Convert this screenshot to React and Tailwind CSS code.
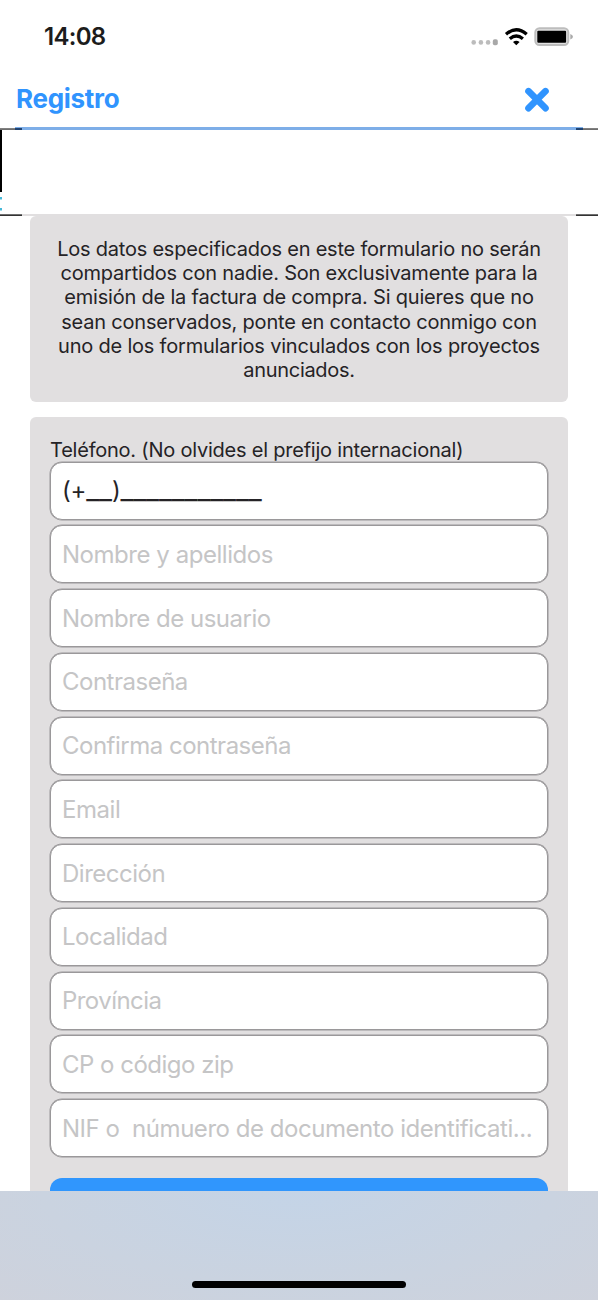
const notice = [
  ["Los datos especificados en este formulario no serán", "tracking-[-0.22px]"],
  ["compartidos con nadie. Son exclusivamente para la", "tracking-[-0.2px]"],
  ["emisión de la factura de compra. Si quieres que no", "tracking-[-0.2px]"],
  ["sean conservados, ponte en contacto conmigo con", "tracking-[-0.2px]"],
  ["uno de los formularios vinculados con los proyectos", "tracking-[-0.2px]"],
  ["anunciados.", "tracking-[-0.3px]"],
];

const fields = [
  ["Nombre y apellidos", "tracking-[-0.46px]"],
  ["Nombre de usuario", "tracking-[-0.5px]"],
  ["Contraseña", "tracking-[-0.5px]"],
  ["Confirma contraseña", "tracking-[-0.5px]"],
  ["Email", "tracking-[-0.45px]"],
  ["Dirección", "tracking-[-0.5px]"],
  ["Localidad", "tracking-[-0.5px]"],
  ["Província", "tracking-[-0.55px]"],
  ["CP o código zip", "tracking-[-0.5px]"],
  ["NIF o  númuero de documento identificati...", "tracking-[-0.46px]"],
];

function StatusIcons() {
  return (
    <svg className="mt-[24px] h-[26px] w-[104px]" viewBox="470 24 104 26" fill="none">
      <g fill="#bcbcbc">
        <circle cx="473.7" cy="42.4" r="2.3" />
        <circle cx="480.9" cy="42.4" r="2.3" />
        <circle cx="488.1" cy="42.4" r="2.3" />
        <rect x="492.8" y="39.2" width="5" height="6" rx="1.8" fill="#a8a8a8" />
      </g>
      <g stroke="#000" strokeWidth="3.3">
        <path d="M506 34.2Q516.3 25.2 526.7 34.2" />
        <path d="M509.8 38.7Q516.3 33.3 522.9 38.7" />
      </g>
      <path d="M513 42Q516.3 39.3 519.6 42L516.3 45.2Z" fill="#000" />
      <rect x="535.3" y="28.3" width="33" height="16.6" rx="4.2" fill="#e2e2e2" stroke="#bdbdbd" strokeWidth="2" />
      <rect x="537.3" y="30.7" width="28.8" height="12" rx="1" fill="#000" />
      <path d="M570.3 34Q573 35 573 36.7T570.3 39.4Z" fill="#aaa" />
    </svg>
  );
}

function Field({ children, tone, tracking }) {
  return (
    <div className={`flex h-[58px] shrink-0 items-center rounded-[12px] border border-[#9a989a] bg-white pt-[1px] pl-[11px] text-[24px] shadow-[0_0_0_0.5px_#9a989a] ${tone}`}>
      <span className={`whitespace-pre ${tracking}`}>{children}</span>
    </div>
  );
}

export default function App() {
  return (
    <div className="flex h-[1300px] w-[598px] flex-col overflow-hidden bg-white font-['Inter','Liberation_Sans',sans-serif] text-[#252326]">
      <header className="flex h-[74px] shrink-0 justify-between pr-[24px] pl-[44px]">
        <span className="pt-[20px] text-[24px] leading-[34px] font-semibold tracking-[-0.7px] text-[#1c1c1c]">14:08</span>
        <StatusIcons />
      </header>
      <div className="flex h-[53px] shrink-0 items-start justify-between pr-[48px] pl-[16px] text-[#3094fe]">
        <h1 className="pt-[9px] text-[26px] leading-[32px] font-bold tracking-[-0.3px]">Registro</h1>
        <svg className="mt-[13px] h-[26px] w-[26px]" viewBox="0 0 26 26" stroke="currentColor" strokeWidth="6.6" strokeLinecap="round">
          <path d="M4.5 4.2L21.5 21.2M21.5 4.2L4.5 21.2" />
        </svg>
      </div>
      <svg className="h-[89px] w-[598px] shrink-0" viewBox="0 127 598 89">
        <rect x="15" y="127" width="568" height="3" fill="#7eaee8" />
        <rect x="0" y="128.3" width="22" height="1.5" fill="#4b4b4b" />
        <rect x="576" y="128.3" width="22" height="1.5" fill="#4b4b4b" />
        <rect x="15" y="128.1" width="7" height="1.9" fill="#1d4271" />
        <rect x="576" y="128.1" width="7" height="1.9" fill="#1d4271" />
        <rect x="0" y="130" width="2" height="62" fill="#000" />
        <rect x="0" y="197" width="2" height="2.5" fill="#45b8d8" />
        <rect x="0" y="208" width="2" height="2.5" fill="#45b8d8" />
        <rect x="22" y="214" width="554" height="2" fill="#e1dfe0" />
        <rect x="0" y="214.3" width="22" height="1.7" fill="#333" />
        <rect x="576" y="214.3" width="22" height="1.7" fill="#333" />
      </svg>
      <main className="flex h-[975px] shrink-0 flex-col gap-[15px] overflow-hidden px-[30px]">
        <p className="flex h-[186px] shrink-0 flex-col items-center rounded-[6px] bg-[#e1dfe0] pt-[21px] text-[20px] leading-[24.2px]">
          {notice.map(([text, tracking]) => (
            <span key={text} className={`whitespace-nowrap ${tracking}`}>{text}</span>
          ))}
        </p>
        <form className="flex h-[800px] shrink-0 flex-col rounded-t-[6px] bg-[#e1dfe0] px-[20px] pt-[20px]">
          <label className="h-[24.5px] shrink-0 text-[20px] leading-[26px] whitespace-nowrap"><span className="tracking-[-0.22px]">Teléfono. (No olvides el prefijo internacional)</span></label>
          <div className="flex flex-col gap-[5.78px]">
            <Field tone="text-[#252326]" tracking="tracking-[-0.2px]">
              (+<span className="text-[28.4px] leading-[20px] tracking-[-0.12px]">__</span>)<span className="text-[28.4px] leading-[20px] tracking-[-0.12px]">___________</span>
            </Field>
            {fields.map(([text, tracking]) => (
              <Field key={text} tone="text-[#c5c5c6]" tracking={tracking}>{text}</Field>
            ))}
          </div>
          <div className="mt-[20.5px] h-[58px] shrink-0 rounded-[12px] bg-[#3096fd]" />
        </form>
      </main>
      <footer className="flex h-[110px] shrink-0 justify-center bg-[radial-gradient(ellipse_at_50%_0%,#c4d4e7_0%,#cad3e0_60%,#ced2dc_100%)] pt-[90px]">
        <div className="h-[7px] w-[214px] rounded-full bg-black" />
      </footer>
    </div>
  );
}
